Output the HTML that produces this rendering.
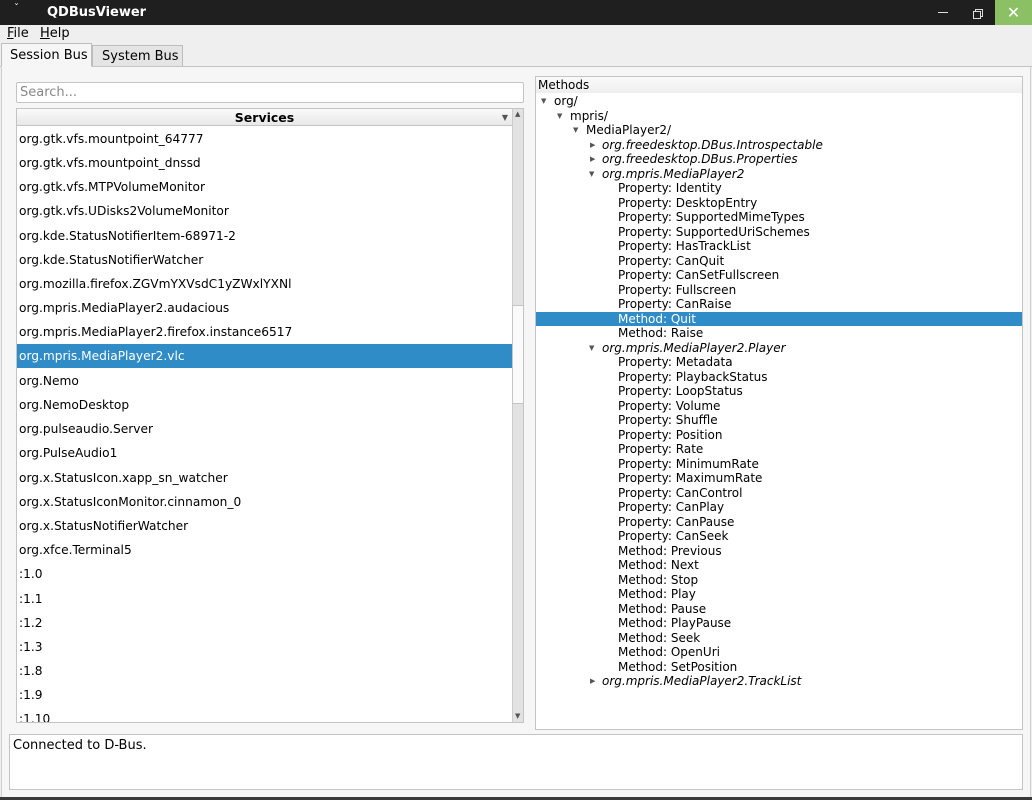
<!DOCTYPE html>
<html><head><meta charset="utf-8"><style>
*{margin:0;padding:0;box-sizing:border-box}
body{width:1032px;height:800px;background:#efefef;font-family:"DejaVu Sans","Liberation Sans",sans-serif;position:relative;overflow:hidden;color:#000}
.abs{position:absolute}
#title{left:0;top:0;width:1032px;height:25px;background:#1f1f1f;color:#fff;font-weight:bold;font-size:13px}
#menu{top:25px;left:0;width:1032px;height:19px;font-size:13px}
.tab{font-size:13px;height:24px;border:1px solid #bdbdbd;border-bottom:none}
.list{background:#fff;border:1px solid #c4c4c4}
.svc{position:absolute;left:2px;font-size:12.2px;height:24px;line-height:24px;white-space:nowrap}
.tr{position:absolute;font-size:12px;height:14.5px;line-height:14.5px;white-space:nowrap}
.i{font-style:italic}
.ar{position:absolute;font-size:7px;color:#555}
</style></head><body>
<div id="title" class="abs">
<span class="abs" style="left:14px;top:3px;font-size:10px;font-weight:normal">ˇ</span>
<span class="abs" style="left:47px;top:5px">QDBusViewer</span>
<div class="abs" style="left:938px;top:12px;width:10px;height:1px;background:#ddd"></div>
<div class="abs" style="left:975px;top:9px;width:8px;height:8px;border:1px solid #ddd"></div>
<div class="abs" style="left:973px;top:11px;width:8px;height:8px;border:1px solid #ddd;background:#1f1f1f"></div>
<div class="abs" style="left:995px;top:0;width:37px;height:25px;background:#8bc064;color:#fff;text-align:center;font-size:16px;line-height:25px;font-weight:normal">✕</div>
</div>
<div id="menu" class="abs"><span class="abs" style="left:7px;top:1px"><u>F</u>ile</span><span class="abs" style="left:40px;top:1px"><u>H</u>elp</span></div>
<div class="abs" style="left:0;top:66px;width:1032px;height:1px;background:#c4c4c4"></div>
<div class="abs tab" style="left:1px;top:43px;width:91px;height:24px;background:#f6f6f6;border-bottom:1px solid #f6f6f6;padding:4px 0 0 8px">Session Bus</div>
<div class="abs tab" style="left:92px;top:45px;width:91px;height:21px;background:#e4e4e4;padding:3px 0 0 9px">System Bus</div>
<div class="abs" style="left:1px;top:67px;width:1030px;height:731px;background:#f6f6f6;border-left:1px solid #d0d0d0;border-right:1px solid #d0d0d0"></div>
<div class="abs" style="left:0;top:797px;width:1032px;height:3px;background:#3a3a3a"></div>

<div class="abs list" style="left:16px;top:82px;width:508px;height:21px;border-radius:2px;font-size:13px;color:#888;padding:2px 3px">Search...</div>

<div class="abs list" style="left:16px;top:108px;width:508px;height:615px;overflow:hidden">
<div class="abs" style="left:0;top:0;width:495px;height:17px;background:linear-gradient(#fafafa,#e8e8e8);border-bottom:1px solid #c4c4c4;font-weight:bold;font-size:12.5px;text-align:center;line-height:17px">Services<span class="abs" style="right:4px;top:0;font-size:8px;color:#555">▼</span></div>
<div class="abs" style="left:495px;top:0;width:12px;height:614px;background:#e2e2e2;border-left:1px solid #ccc"></div>
<div class="abs" style="left:495px;top:196px;width:12px;height:99px;background:#fafafa;border:1px solid #c6c6c6"></div>
<span class="abs" style="left:498px;top:1px;font-size:7px;color:#555">▲</span>
<span class="abs" style="left:498px;top:603px;font-size:7px;color:#555">▼</span>
<div class="abs" style="left:0;top:235px;width:495px;height:24px;background:#308cc6"></div>
<div class="svc" style="top:18px">org.gtk.vfs.mountpoint_64777</div>
<div class="svc" style="top:42px">org.gtk.vfs.mountpoint_dnssd</div>
<div class="svc" style="top:66px">org.gtk.vfs.MTPVolumeMonitor</div>
<div class="svc" style="top:90px">org.gtk.vfs.UDisks2VolumeMonitor</div>
<div class="svc" style="top:115px">org.kde.StatusNotifierItem-68971-2</div>
<div class="svc" style="top:139px">org.kde.StatusNotifierWatcher</div>
<div class="svc" style="top:163px">org.mozilla.firefox.ZGVmYXVsdC1yZWxlYXNl</div>
<div class="svc" style="top:187px">org.mpris.MediaPlayer2.audacious</div>
<div class="svc" style="top:211px">org.mpris.MediaPlayer2.firefox.instance6517</div>
<div class="svc" style="top:235px;color:#fff">org.mpris.MediaPlayer2.vlc</div>
<div class="svc" style="top:260px">org.Nemo</div>
<div class="svc" style="top:284px">org.NemoDesktop</div>
<div class="svc" style="top:308px">org.pulseaudio.Server</div>
<div class="svc" style="top:332px">org.PulseAudio1</div>
<div class="svc" style="top:357px">org.x.StatusIcon.xapp_sn_watcher</div>
<div class="svc" style="top:381px">org.x.StatusIconMonitor.cinnamon_0</div>
<div class="svc" style="top:405px">org.x.StatusNotifierWatcher</div>
<div class="svc" style="top:429px">org.xfce.Terminal5</div>
<div class="svc" style="top:453px">:1.0</div>
<div class="svc" style="top:478px">:1.1</div>
<div class="svc" style="top:502px">:1.2</div>
<div class="svc" style="top:526px">:1.3</div>
<div class="svc" style="top:550px">:1.8</div>
<div class="svc" style="top:574px">:1.9</div>
<div class="svc" style="top:598px">:1.10</div>
</div>

<div class="abs list" style="left:535px;top:76px;width:488px;height:654px;overflow:hidden">
<div class="abs" style="left:0;top:0;width:486px;height:16px;background:linear-gradient(#fafafa,#eeeeee);font-size:12px;padding-left:2px;line-height:16px">Methods</div>
<div class="abs" style="left:0;top:234.5px;width:486px;height:14.5px;background:#308cc6"></div>
<div id="tree"></div>
</div>

<div class="abs list" style="left:9px;top:734px;width:1014px;height:56px;font-size:13px;padding:3px 3px">Connected to D-Bus.</div>
<script>
var rows=[[0,'org/','d'],[1,'mpris/','d'],[2,'MediaPlayer2/','d'],[3,'org.freedesktop.DBus.Introspectable','r',1],[3,'org.freedesktop.DBus.Properties','r',1],[3,'org.mpris.MediaPlayer2','d',1],
[4,'Property: Identity'],[4,'Property: DesktopEntry'],[4,'Property: SupportedMimeTypes'],[4,'Property: SupportedUriSchemes'],[4,'Property: HasTrackList'],[4,'Property: CanQuit'],[4,'Property: CanSetFullscreen'],[4,'Property: Fullscreen'],[4,'Property: CanRaise'],[4,'Method: Quit','',0,1],[4,'Method: Raise'],
[3,'org.mpris.MediaPlayer2.Player','d',1],[4,'Property: Metadata'],[4,'Property: PlaybackStatus'],[4,'Property: LoopStatus'],[4,'Property: Volume'],[4,'Property: Shuffle'],[4,'Property: Position'],[4,'Property: Rate'],[4,'Property: MinimumRate'],[4,'Property: MaximumRate'],[4,'Property: CanControl'],[4,'Property: CanPlay'],[4,'Property: CanPause'],[4,'Property: CanSeek'],[4,'Method: Previous'],[4,'Method: Next'],[4,'Method: Stop'],[4,'Method: Play'],[4,'Method: Pause'],[4,'Method: PlayPause'],[4,'Method: Seek'],[4,'Method: OpenUri'],[4,'Method: SetPosition'],[3,'org.mpris.MediaPlayer2.TrackList','r',1]];
var h='';rows.forEach(function(r,i){var y=17+i*14.5;var x=18+r[0]*16;
if(r[2]=='d')h+='<span class="ar" style="left:'+(x-13)+'px;top:'+(y+3)+'px">▼</span>';
if(r[2]=='r')h+='<span class="ar" style="left:'+(x-12)+'px;top:'+(y+3)+'px">▶</span>';
h+='<div class="tr'+(r[3]?' i':'')+'" style="left:'+x+'px;top:'+y+'px;'+(r[4]?'color:#fff':'')+'">'+r[1]+'</div>';});
document.getElementById('tree').innerHTML=h;
</script>
</body></html>
